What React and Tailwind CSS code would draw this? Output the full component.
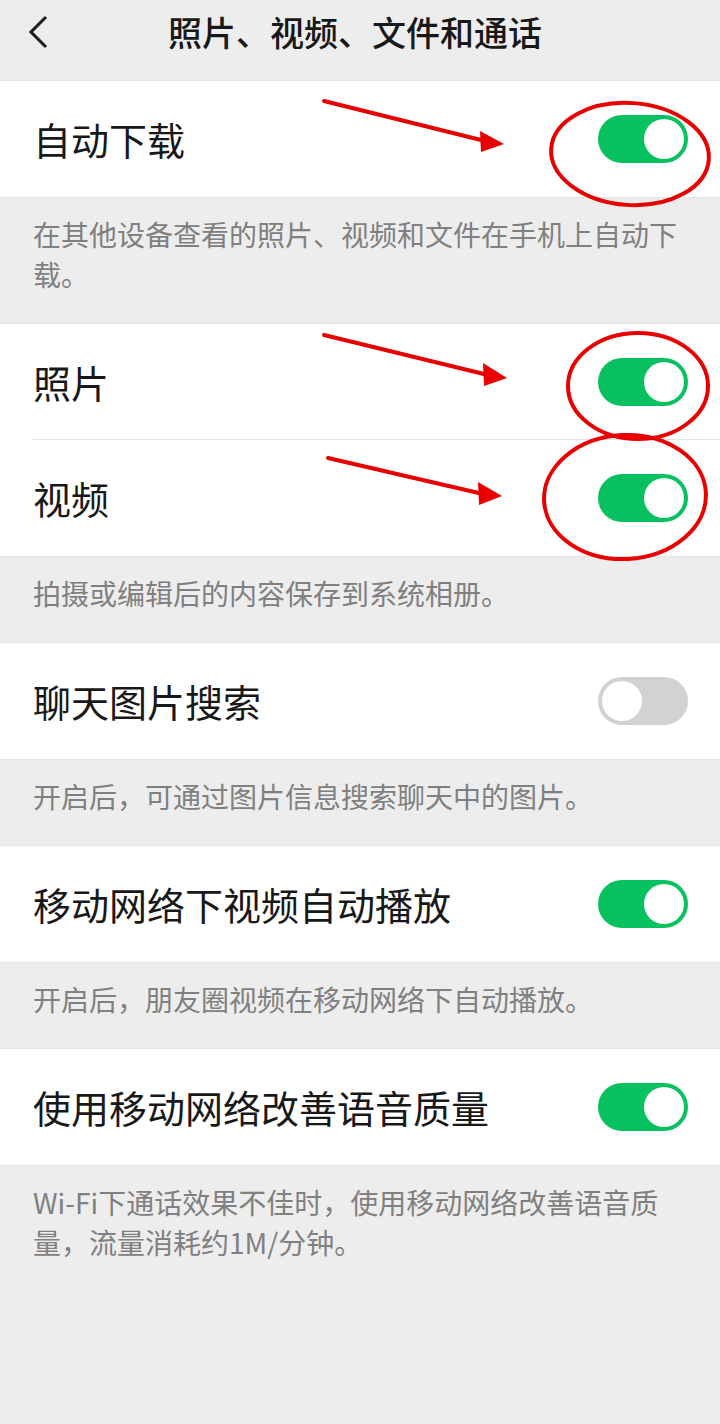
import React from 'react'

const font = { fontFamily: '"Noto Sans CJK SC", "Noto Sans", sans-serif' }

const Toggle = ({ on }) => (
  <div
    className={`w-[90px] h-[48px] rounded-full p-[4px] flex items-center ${
      on ? 'bg-[#07c160] justify-end' : 'bg-[#d2d2d2] justify-start'
    }`}
  >
    <div className="w-[40px] h-[40px] rounded-full bg-white" />
  </div>
)

const Row = ({ title, on, divider }) => (
  <div className="pl-[33px]">
    <div
      className={`h-[116px] flex items-center justify-between pr-[32px] ${
        divider ? 'border-b border-[#e3e3e3]' : ''
      }`}
    >
      <span className="text-[38px] text-[#181818] leading-none">{title}</span>
      <Toggle on={on} />
    </div>
  </div>
)

const Group = ({ children }) => (
  <div className="bg-white border-y border-[#e3e3e3]">{children}</div>
)

const Note = ({ children }) => (
  <div className="px-[33px] pt-[16px] pb-[29px] text-[28px] leading-[40px] text-[#808080]">
    {children}
  </div>
)

const Annotations = () => (
  <svg
    className="absolute left-0 top-0 pointer-events-none"
    width="720"
    height="600"
    viewBox="0 0 720 600"
  >
    <g stroke="#e80000" strokeWidth="4" fill="none" strokeLinecap="round">
      <line x1="324" y1="101" x2="485" y2="141" />
      <line x1="324" y1="335" x2="488" y2="375" />
      <line x1="328" y1="458" x2="483" y2="494" />
      <ellipse cx="630" cy="154" rx="79" ry="51" transform="rotate(4 630 154)" />
      <ellipse cx="638" cy="386" rx="70" ry="53" />
      <ellipse cx="625" cy="497" rx="81" ry="62" transform="rotate(-3 625 497)" />
    </g>
    <g fill="#e80000">
      <polygon points="504,144 480,131 481,152" />
      <polygon points="507,378 483,363 484,386" />
      <polygon points="502,496 478,482 479,505" />
    </g>
  </svg>
)

const App = () => {
  return (
    <div className="relative w-[720px] min-h-[1424px] bg-[#ededed]" style={font}>
      {/* Header */}
      <div className="relative h-[80px] flex items-center justify-center">
        <svg className="absolute left-[26px] top-[15px]" width="26" height="36" viewBox="0 0 26 36">
          <polyline points="20,2 5,17 20,32" fill="none" stroke="#1a1a1a" strokeWidth="3" />
        </svg>
        <span className="text-[34px] font-medium text-[#181818] leading-none -mt-[16px] -ml-[10px]">
          照片、视频、文件和通话
        </span>
      </div>

      <Group>
        <Row title="自动下载" on />
      </Group>
      <Note>在其他设备查看的照片、视频和文件在手机上自动下载。</Note>

      <Group>
        <Row title="照片" on divider />
        <Row title="视频" on />
      </Group>
      <Note>拍摄或编辑后的内容保存到系统相册。</Note>

      <Group>
        <Row title="聊天图片搜索" on={false} />
      </Group>
      <Note>开启后，可通过图片信息搜索聊天中的图片。</Note>

      <Group>
        <Row title="移动网络下视频自动播放" on />
      </Group>
      <Note>开启后，朋友圈视频在移动网络下自动播放。</Note>

      <Group>
        <Row title="使用移动网络改善语音质量" on />
      </Group>
      <Note>Wi-Fi下通话效果不佳时，使用移动网络改善语音质量，流量消耗约1M/分钟。</Note>

      <Annotations />
    </div>
  )
}

export default App
